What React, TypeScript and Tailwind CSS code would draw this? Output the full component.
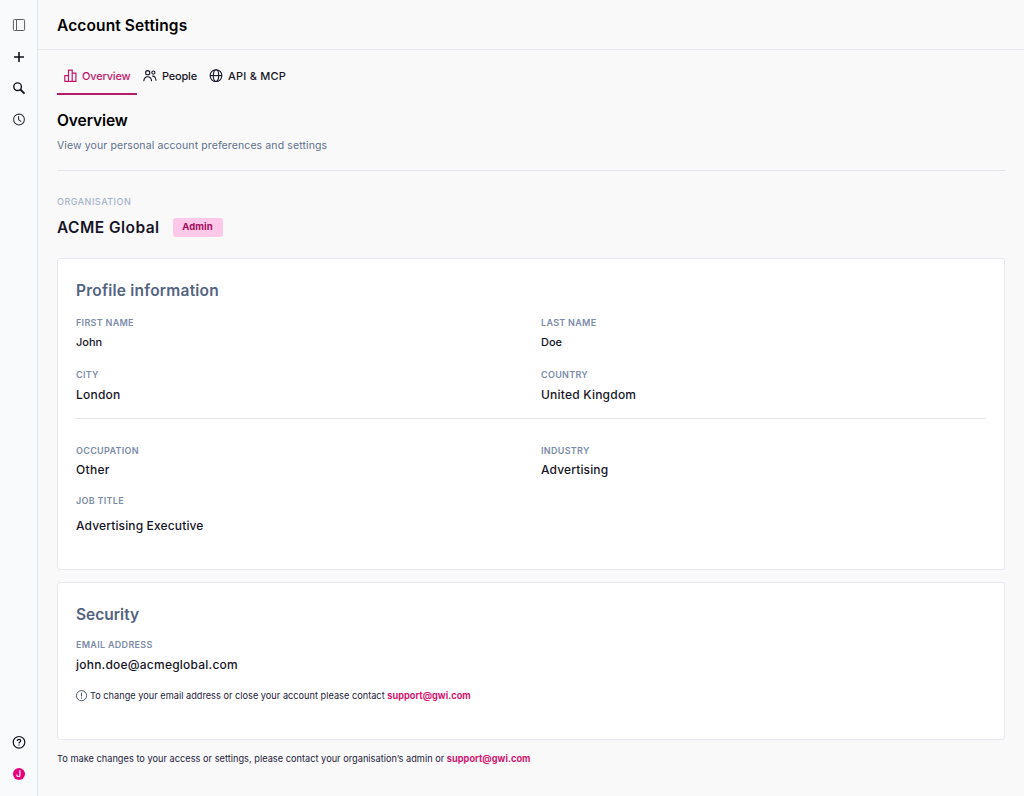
import type { ReactNode } from "react";

function SidebarIcon({ children }: { children: ReactNode }) {
  return <button className="flex h-[31.4px] w-full items-center justify-center text-[#101020]">{children}</button>;
}

function Sidebar() {
  return (
    <aside className="flex w-[38px] shrink-0 flex-col justify-between border-r border-[#e2e4ec] bg-[#f9fafc] pt-[9.5px] pb-[6.5px]">
      <div>
        <SidebarIcon>
          <svg width="14" height="14" viewBox="0 0 14 14" fill="none" stroke="#5c5e68" strokeWidth="1">
            <rect x="1.4" y="1.5" width="11.2" height="11" rx="1" />
            <path d="M4.5 1.5v11" />
          </svg>
        </SidebarIcon>
        <SidebarIcon>
          <svg width="14" height="14" viewBox="0 0 14 14" fill="none" stroke="currentColor" strokeWidth="1.6">
            <path d="M7 2v10M2 7h10" />
          </svg>
        </SidebarIcon>
        <SidebarIcon>
          <svg width="14" height="14" viewBox="0 0 14 14" fill="none" stroke="currentColor" strokeWidth="1.4">
            <circle cx="5.6" cy="5.7" r="3.8" />
            <path d="M8.4 8.5l4.1 4.1" strokeWidth="1.8" />
          </svg>
        </SidebarIcon>
        <SidebarIcon>
          <svg width="14" height="14" viewBox="0 0 14 14" fill="none" stroke="#30313f" strokeWidth="1.05">
            <circle cx="7" cy="7.5" r="5.4" />
            <path d="M6.6 4.1v3.7l2.6 1.8" />
          </svg>
        </SidebarIcon>
      </div>
      <div>
        <SidebarIcon>
          <svg width="14" height="14" viewBox="0 0 14 14" fill="none" stroke="currentColor" strokeWidth="1.2">
            <circle cx="7" cy="7.3" r="5.8" />
            <path d="M5.3 5.9c0-2.2 3.4-2.1 3.4-.1 0 1.3-1.7 1.3-1.7 2.6M7 9.4v1.2" />
          </svg>
        </SidebarIcon>
        <SidebarIcon>
          <span className="flex size-3 items-center justify-center rounded-full bg-[#e6007e] text-[9px] font-medium text-white">
            J
          </span>
        </SidebarIcon>
      </div>
    </aside>
  );
}

function BarsIcon() {
  return (
    <svg width="13" height="14" viewBox="0 0 13 14" fill="none" stroke="currentColor" strokeWidth="1.2">
      <path d="M.8 6.6h3.7v5.8H.8zM4.5 1.2h3.7v11.2H4.5zM8.2 4.2h3.7v8.2H8.2z" />
    </svg>
  );
}

function PeopleIcon() {
  return (
    <svg width="14" height="14" viewBox="0 0 14 14" fill="none" stroke="currentColor" strokeWidth="1.1">
      <circle cx="4.7" cy="3.7" r="2.1" />
      <path d="M.8 12.2c.2-2.9 1.6-4.4 3.9-4.4s3.7 1.5 3.9 4.4" />
      <circle cx="10.4" cy="3.6" r="1.6" />
      <path d="M9.2 7.2c2.4-.4 3.6 1.2 3.8 4.6" />
    </svg>
  );
}

function GlobeIcon() {
  return (
    <svg width="14" height="14" viewBox="0 0 14 14" fill="none" stroke="currentColor" strokeWidth="1.1">
      <circle cx="7" cy="6.6" r="5.9" />
      <ellipse cx="7" cy="6.6" rx="2.7" ry="5.9" />
      <path d="M1.1 6.6h11.8" />
    </svg>
  );
}

function Field({ label, value, className = "" }: { label: string; value: string; className?: string }) {
  return (
    <div>
      <dt className="text-[9px] leading-3 font-semibold tracking-[0.3px] text-[#7c8ba8]">{label}</dt>
      <dd className={`leading-4 font-medium ${className || "mt-[6px] text-[12px] tracking-[0.22px]"}`}>{value}</dd>
    </div>
  );
}

function SupportLink() {
  return <a className="font-bold text-[#d6156f]">support@gwi.com</a>;
}

export default function App() {
  return (
    <div className="flex h-[796px] bg-[#f9f9f9] font-['Inter',sans-serif] text-[#161527]">
      <Sidebar />
      <div className="flex min-w-0 flex-1 flex-col">
        <header className="flex h-[50px] shrink-0 items-center border-b border-[#e8eaf0] pt-[2px] pl-[19px]">
          <h1 className="text-[15.5px] leading-5 font-semibold tracking-[0.12px] text-black">Account Settings</h1>
        </header>
        <main className="pr-[19px] pl-[19px]">
          <nav className="flex h-[45px] text-[11px] font-medium">
            <a className="flex h-full w-20 items-center gap-[5px] border-b-2 border-[#b51c67] pt-[8px] pl-[7px] text-[#c0186b]">
              <BarsIcon />
              <span className="pt-px tracking-[-0.18px]">Overview</span>
            </a>
            <a className="flex h-full items-center gap-[5px] pt-[6px] pl-[6px]">
              <PeopleIcon />
              <span className="w-[35px] pt-px tracking-[-0.2px]">People</span>
            </a>
            <a className="flex h-full items-center gap-[5px] pt-[6px] pl-[12px]">
              <GlobeIcon />
              <span className="pt-px tracking-[0.22px]">API &amp; MCP</span>
            </a>
          </nav>
          <section className="h-[76px] border-b border-[#e2e5ec] pt-[16px]">
            <h2 className="text-[15.5px] leading-5 font-semibold tracking-[-0.08px] text-black">Overview</h2>
            <p className="mt-[7px] text-[10.5px] leading-4 tracking-[0.11px] text-[#5f6f8e]">
              View your personal account preferences and settings
            </p>
          </section>
          <section className="h-[87px] pt-[25px]">
            <p className="text-[9px] leading-3 font-medium tracking-[0.5px] text-[#a6b2c9]">ORGANISATION</p>
            <div className="mt-[9.5px] flex items-center gap-[12.5px]">
              <h2 className="w-[103px] text-[15.5px] leading-5 font-semibold tracking-[0.45px]">ACME Global</h2>
              <span className="-mt-px flex h-[19px] w-[50px] items-center justify-center rounded-[3px] bg-[#ffc8e8] pt-px text-[9.5px] font-bold tracking-[0.1px] text-[#a50d60]">
                Admin
              </span>
            </div>
          </section>

          <section className="h-[312px] rounded-[3px] border border-[#e6e9f0] bg-white px-[18px] pt-[22px]">
            <h3 className="text-[15.5px] leading-5 font-semibold tracking-[0.22px] text-[#536380]">
              Profile information
            </h3>
            <dl className="mt-[16px] grid h-[102px] grid-cols-[465px_1fr] grid-rows-[52px_1fr] border-b border-[#e2e5ea]">
              <Field label="FIRST NAME" value="John" className="mt-[5px] text-[11px]" />
              <Field label="LAST NAME" value="Doe" className="mt-[5px] text-[11px]" />
              <Field label="CITY" value="London" />
              <Field label="COUNTRY" value="United Kingdom" />
            </dl>
            <dl className="mt-[26px] grid grid-cols-[465px_1fr] grid-rows-[50px_auto]">
              <Field label="OCCUPATION" value="Other" className="mt-[5px] text-[12px] tracking-[0.3px]" />
              <Field label="INDUSTRY" value="Advertising" className="mt-[5px] text-[12px] tracking-[0.14px]" />
              <Field label="JOB TITLE" value="Advertising Executive" className="mt-[11px] text-[12px] tracking-[0.14px]" />
            </dl>
          </section>

          <section className="mt-3 h-[158px] rounded-[3px] border border-[#e6e9f0] bg-white px-[18px] pt-[22px]">
            <h3 className="text-[15.5px] leading-5 font-semibold text-[#536380]">Security</h3>
            <dl className="mt-[14px]">
              <Field label="EMAIL ADDRESS" value="john.doe@acmeglobal.com" />
            </dl>
            <p className="mt-[16px] flex h-[14px] items-center gap-[2px] text-[9.2px] leading-[14px] text-[#24233a]">
              <svg width="12" height="12" viewBox="0 0 12 12" fill="none" stroke="#4b5570" strokeWidth="1">
                <circle cx="5.5" cy="5.7" r="5.1" />
                <path d="M5.5 2.8v3.7M5.5 7.5v1.2" />
              </svg>
              <span className="tracking-[0.012px]">
                To change your email address or close your account please contact <SupportLink />
              </span>
            </p>
          </section>
          <p className="mt-[12px] text-[9.2px] leading-[14px] tracking-[0.025px] text-[#24233a]">
            To make changes to your access or settings, please contact your organisation’s admin or <SupportLink />
          </p>
        </main>
      </div>
    </div>
  );
}
